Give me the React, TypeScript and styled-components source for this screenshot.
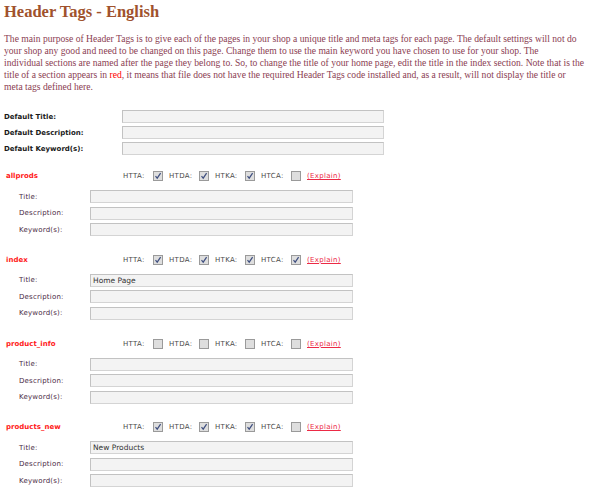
import styled, { createGlobalStyle } from 'styled-components';

const GlobalStyle = createGlobalStyle`
  html, body {
    margin: 0;
    padding: 0;
    background: #ffffff;
  }
`;

const Page = styled.div`
  padding: 0 4px;
  width: 592px;
`;

const Title = styled.h1`
  font-family: "Liberation Serif", "Times New Roman", serif;
  font-size: 16.5px;
  font-weight: bold;
  color: #a0522d;
  margin: 0;
  padding-top: 2px;
  line-height: 19px;
`;

const Intro = styled.p`
  font-family: "Liberation Serif", "Times New Roman", serif;
  font-size: 9.6px;
  line-height: 12px;
  color: #8b4052;
  margin: 12px 0 0;
  white-space: nowrap;

  .red {
    color: #ff0000;
  }
`;

const DefaultsGrid = styled.div`
  display: grid;
  grid-template-columns: 118px 262px;
  grid-auto-rows: 13px;
  row-gap: 3px;
  align-items: center;
  margin-top: 17px;
`;

const DefaultLabel = styled.span`
  font-family: "DejaVu Sans", Verdana, sans-serif;
  font-size: 7px;
  font-weight: bold;
  color: #1a1a1a;
`;

const Field = styled.input<{ $width: number }>`
  box-sizing: border-box;
  width: ${p => p.$width}px;
  height: 13px;
  margin: 0;
  padding: 0 2px;
  background: #f3f3f3;
  border: 1px solid #c2c2c2;
  border-right-color: #d4d4d4;
  border-bottom-color: #d4d4d4;
  font-family: "DejaVu Sans", Verdana, sans-serif;
  font-size: 7.5px;
  color: #333;
  outline: none;
`;

const SectionList = styled.div`
  margin-top: 14px;
  display: flex;
  flex-direction: column;
  gap: 16.8px;
`;

const Section = styled.div`
  display: flex;
  flex-direction: column;
`;

const SectionHead = styled.div`
  display: grid;
  grid-template-columns: 119px auto;
  align-items: center;
  height: 14px;
`;

const SectionName = styled.span`
  font-family: "DejaVu Sans", Verdana, sans-serif;
  font-size: 7px;
  font-weight: bold;
  color: #ff1a1a;
  padding-left: 2px;
`;

const Flags = styled.div`
  display: flex;
  align-items: center;
`;

const FlagLabel = styled.span`
  font-family: "DejaVu Sans", Verdana, sans-serif;
  font-size: 7px;
  color: #4a4a4a;
  letter-spacing: 0.3px;
  width: 30px;
`;

const Box = styled.span`
  box-sizing: border-box;
  width: 10px;
  height: 10px;
  border: 1px solid #9a9a9a;
  background: #dedede;
  display: inline-flex;
  align-items: center;
  justify-content: center;
  margin-right: 6px;
`;

const Explain = styled.a`
  font-family: "DejaVu Sans", Verdana, sans-serif;
  font-size: 7px;
  color: #ec2a45;
  text-decoration: underline;
  letter-spacing: 0.3px;
`;

const FieldsGrid = styled.div`
  display: grid;
  grid-template-columns: 86px 263px;
  grid-auto-rows: 13px;
  row-gap: 3.5px;
  align-items: center;
  margin-top: 7px;
`;

const FieldLabel = styled.span`
  font-family: "DejaVu Sans", Verdana, sans-serif;
  font-size: 7px;
  color: #4a2a44;
  padding-left: 15px;
  letter-spacing: 0.2px;
`;

const Check = ({ on }: { on: boolean }) => (
  <Box>
    {on && (
      <svg width="8" height="8" viewBox="0 0 8 8">
        <path d="M1.5 4.2 L3.2 6.2 L6.6 1.2" fill="none" stroke="#3f4f7f" strokeWidth="1.2" />
      </svg>
    )}
  </Box>
);

const sections = [
  { name: 'allprods', flags: [true, true, true, false], title: '' },
  { name: 'index', flags: [true, true, true, true], title: 'Home Page' },
  { name: 'product_info', flags: [false, false, false, false], title: '' },
  { name: 'products_new', flags: [true, true, true, false], title: 'New Products' },
];

const flagNames = ['HTTA:', 'HTDA:', 'HTKA:', 'HTCA:'];

const App = () => {
  return (
    <Page>
      <GlobalStyle />
      <Title>Header Tags - English</Title>
      <Intro>
        The main purpose of Header Tags is to give each of the pages in your shop a unique title and meta tags for each page. The default settings will not do<br />
        your shop any good and need to be changed on this page. Change them to use the main keyword you have chosen to use for your shop. The<br />
        individual sections are named after the page they belong to. So, to change the title of your home page, edit the title in the index section. Note that is the<br />
        title of a section appears in <span className="red">red</span>, it means that file does not have the required Header Tags code installed and, as a result, will not display the title or<br />
        meta tags defined here.
      </Intro>

      <DefaultsGrid>
        <DefaultLabel>Default Title:</DefaultLabel>
        <Field $width={262} readOnly defaultValue="" />
        <DefaultLabel>Default Description:</DefaultLabel>
        <Field $width={262} readOnly defaultValue="" />
        <DefaultLabel>Default Keyword(s):</DefaultLabel>
        <Field $width={262} readOnly defaultValue="" />
      </DefaultsGrid>

      <SectionList>
        {sections.map(s => (
          <Section key={s.name}>
            <SectionHead>
              <SectionName>{s.name}</SectionName>
              <Flags>
                {flagNames.map((f, i) => (
                  <Flags key={f}>
                    <FlagLabel>{f}</FlagLabel>
                    <Check on={s.flags[i]} />
                  </Flags>
                ))}
                <Explain href="#">(Explain)</Explain>
              </Flags>
            </SectionHead>
            <FieldsGrid>
              <FieldLabel>Title:</FieldLabel>
              <Field $width={263} readOnly defaultValue={s.title} />
              <FieldLabel>Description:</FieldLabel>
              <Field $width={263} readOnly defaultValue="" />
              <FieldLabel>Keyword(s):</FieldLabel>
              <Field $width={263} readOnly defaultValue="" />
            </FieldsGrid>
          </Section>
        ))}
      </SectionList>
    </Page>
  );
};

export default App;
